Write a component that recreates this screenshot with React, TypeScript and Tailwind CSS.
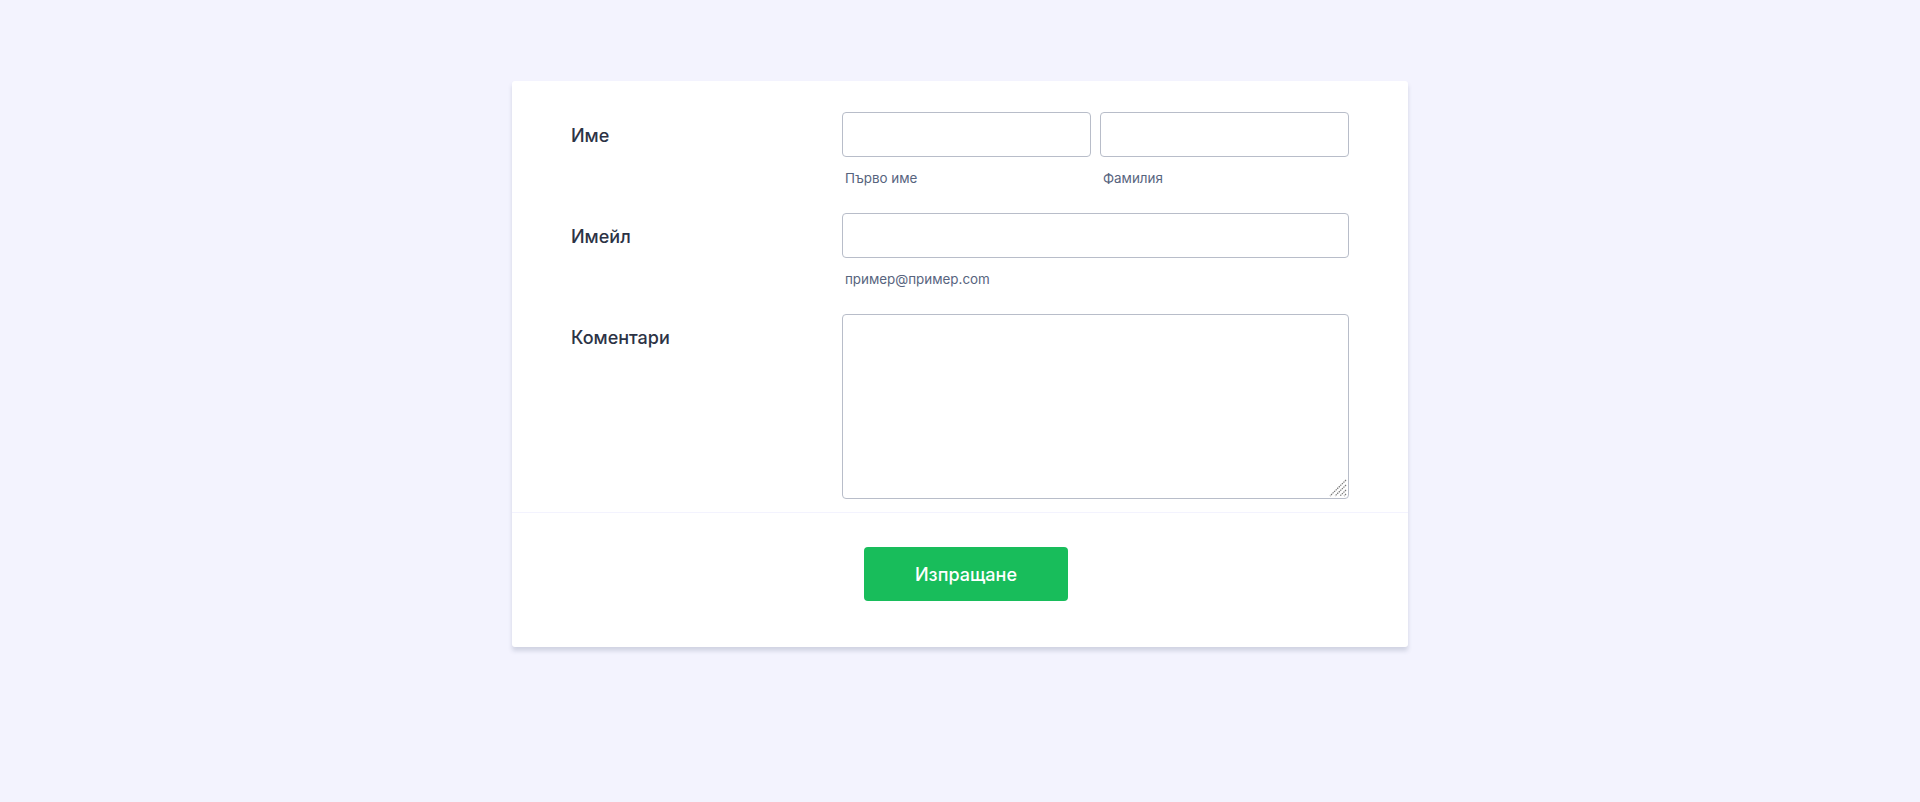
import React from 'react';

// Контактна форма – една карта върху светъл фон
const Field: React.FC<{ label: string; children: React.ReactNode }> = ({ label, children }) => (
  <div className="flex">
    <label className="w-[271px] shrink-0 pt-[10px] text-[18px] leading-[27px] font-medium text-[#2c3345]">
      {label}
    </label>
    <div className="flex-1">{children}</div>
  </div>
);

const Sub: React.FC<{ text: string }> = ({ text }) => (
  <div className="mt-[11px] pl-[3px] text-[13.4px] leading-[20px] text-[#57647e]">{text}</div>
);

const inputCls =
  'block w-full h-[45px] rounded-[4px] border border-[#b8bdc9] bg-white px-3 text-[16px] text-[#2c3345] outline-none focus:border-[#2e69ff]';

const App: React.FC = () => {
  return (
    <div
      className="min-h-[802px] bg-[#f3f3fe] pt-[81px]"
      style={{ fontFamily: 'Inter, "Noto Sans", sans-serif' }}
    >
      <div className="mx-auto w-[896px] rounded-[3px] bg-white shadow-[0_4px_4px_rgba(87,100,126,0.21)]">
        <div className="flex flex-col gap-[25px] pl-[59px] pr-[59px] pt-[31px] pb-[13px]">
          <Field label="Име">
            <div className="flex gap-[9px]">
              <div className="flex-1">
                <input className={inputCls} type="text" />
                <Sub text="Първо име" />
              </div>
              <div className="flex-1">
                <input className={inputCls} type="text" />
                <Sub text="Фамилия" />
              </div>
            </div>
          </Field>
          <Field label="Имейл">
            <input className={inputCls} type="email" />
            <Sub text="пример@пример.com" />
          </Field>
          <Field label="Коментари">
            <div className="relative">
              <textarea className="block w-full h-[185px] resize-none rounded-[4px] border border-[#b8bdc9] bg-white px-3 py-2 text-[16px] text-[#2c3345] outline-none" />
              {/* дръжка за оразмеряване */}
              <svg
                className="pointer-events-none absolute bottom-[2px] right-[2px]"
                width="18"
                height="18"
                viewBox="0 0 18 18"
              >
                <g stroke="#777" strokeWidth="1.2" strokeDasharray="1.4 0.8">
                  <line x1="17" y1="1" x2="1" y2="17" />
                  <line x1="17" y1="6" x2="6" y2="17" />
                  <line x1="17" y1="11" x2="11" y2="17" />
                  <line x1="17" y1="15" x2="15" y2="17" />
                </g>
              </svg>
            </div>
          </Field>
        </div>
        <div className="border-t border-[#f3f3fe] pl-[352px] pt-[34px] pb-[46px]">
          <button className="h-[54px] w-[204px] rounded-[4px] bg-[#18bd5b] text-[18px] font-medium text-white">
            Изпращане
          </button>
        </div>
      </div>
    </div>
  );
};

export default App;
